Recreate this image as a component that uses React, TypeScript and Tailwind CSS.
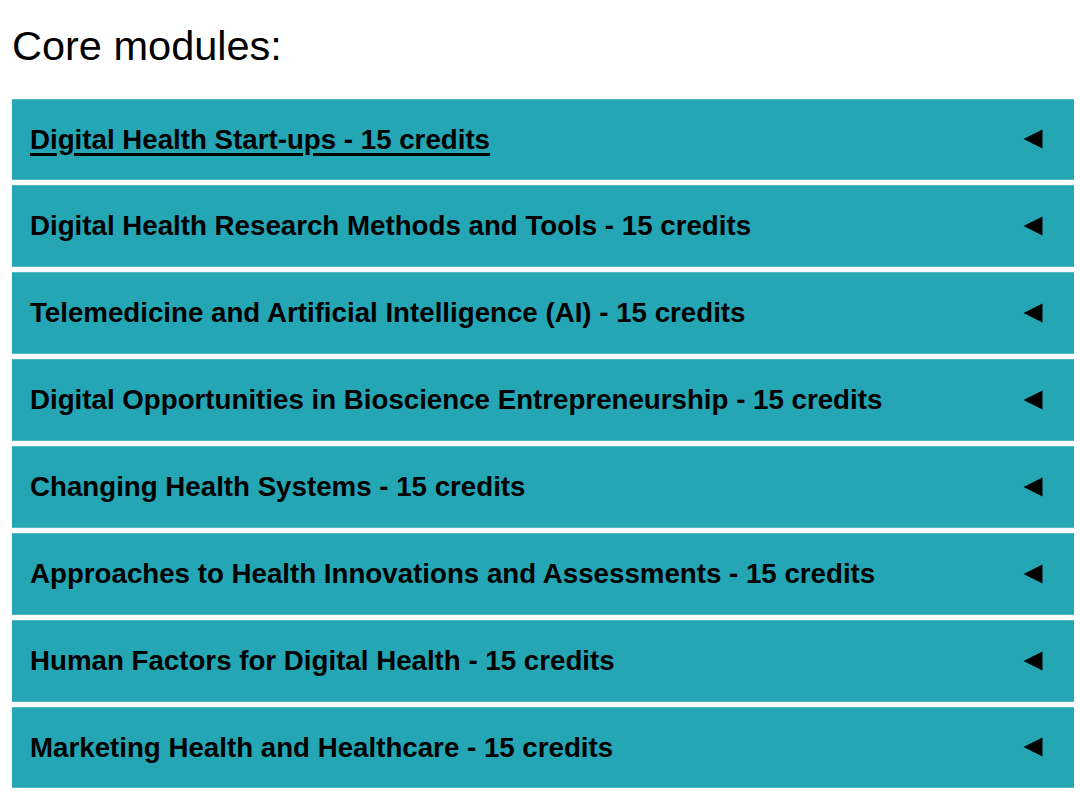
import React from "react";

const modules = [
  "Digital Health Start-ups - 15 credits",
  "Digital Health Research Methods and Tools - 15 credits",
  "Telemedicine and Artificial Intelligence (AI) - 15 credits",
  "Digital Opportunities in Bioscience Entrepreneurship - 15 credits",
  "Changing Health Systems - 15 credits",
  "Approaches to Health Innovations and Assessments - 15 credits",
  "Human Factors for Digital Health - 15 credits",
  "Marketing Health and Healthcare - 15 credits",
];

function Arrow() {
  return (
    <svg width="20" height="20" viewBox="0 0 20 20" className="shrink-0">
      <polygon points="0.5,10 19.5,0.5 19.5,19.5" fill="#000" />
    </svg>
  );
}

export default function App() {
  return (
    <div
      className="min-h-screen bg-white pl-[12px] pr-[6px] text-black"
      style={{ fontFamily: '"Liberation Sans", Arial, sans-serif' }}
    >
      <h2 className="pt-[25px] mb-[32px] text-[41.5px] leading-none font-normal">
        Core modules:
      </h2>

      <div className="flex flex-col gap-[5px]">
        {modules.map((m, idx) => (
          <div
            key={idx}
            className="flex h-[81.86px] items-center justify-between bg-[#24a6b4] pl-[18px] pr-[31px] border-y border-[#4fb8c3]"
          >
            <span
              className={`text-[27.7px] font-bold leading-none ${
                idx === 0 ? "underline decoration-[2.5px] underline-offset-[4px]" : ""
              }`}
            >
              {m}
            </span>
            <Arrow />
          </div>
        ))}
      </div>
    </div>
  );
}
